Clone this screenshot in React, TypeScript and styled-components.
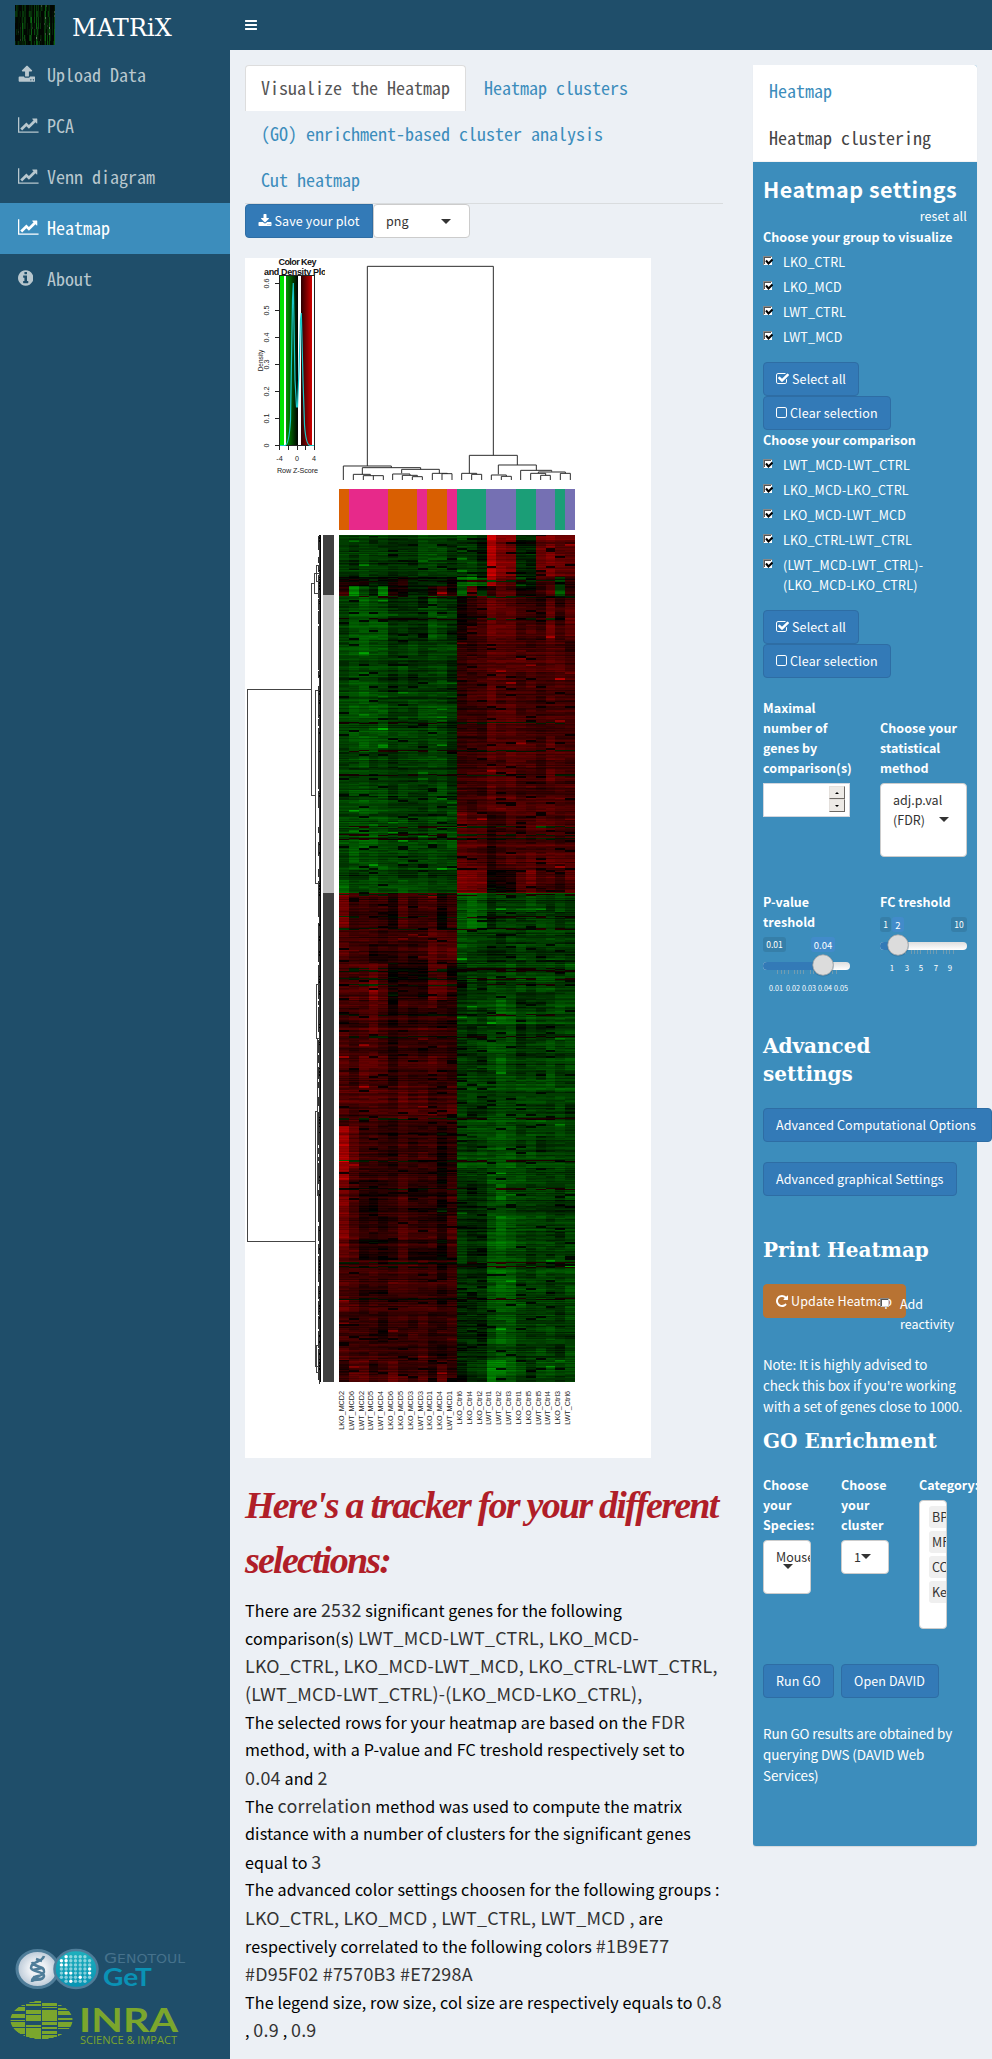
import React from "react";
import styled, { createGlobalStyle, css } from "styled-components";

const sans = '"Noto Sans CJK SC", "Noto Sans", sans-serif';
const mono = '"Noto Sans Mono CJK SC", "Liberation Mono", monospace';
const serif = '"DejaVu Serif", serif';

const GlobalStyle = createGlobalStyle`
  * { box-sizing: border-box; }
  html, body { margin: 0; padding: 0; overflow-x: hidden; }
  body { background: #ecf0f5; color: #333; font: 12.53px/20px ${sans}; }
  h1, h2, h3, p, ul { margin: 0; padding: 0; }
`;

/* ---------- icons ---------- */

const paths = {
  upload:
    "M1344 1472q0-26-19-45t-45-19-45 19-19 45 19 45 45 19 45-19 19-45zm256 0q0-26-19-45t-45-19-45 19-19 45 19 45 45 19 45-19 19-45zm128-224v320q0 40-28 68t-68 28h-1472q-40 0-68-28t-28-68v-320q0-40 28-68t68-28h427q21 56 70.5 92t110.5 36h256q61 0 110.5-36t70.5-92h427q40 0 68 28t28 68zm-325-648q-17 40-59 40h-256v448q0 26-19 45t-45 19h-256q-26 0-45-19t-19-45v-448h-256q-42 0-59-40-17-39 14-69l448-448q18-19 45-19t45 19l448 448q31 30 14 69z",
  download:
    "M1344 1344q0-26-19-45t-45-19-45 19-19 45 19 45 45 19 45-19 19-45zm256 0q0-26-19-45t-45-19-45 19-19 45 19 45 45 19 45-19 19-45zm128-224v320q0 40-28 68t-68 28h-1472q-40 0-68-28t-28-68v-320q0-40 28-68t68-28h465l135 136q58 56 136 56t136-56l136-136h464q40 0 68 28t28 68zm-325-569q17 41-14 70l-448 448q-18 19-45 19t-45-19l-448-448q-31-29-14-70 17-39 59-39h256v-448q0-26 19-45t45-19h256q26 0 45 19t19 45v448h256q42 0 59 39z",
  chart:
    "M2048 1536v128h-2048v-1536h128v1408h1920zm-128-1248v435q0 21-19.5 29.5t-35.5-7.5l-121-121-633 633q-10 10-23 10t-23-10l-233-233-416 416-192-192 585-585q10-10 23-10t23 10l233 233 464-464-121-121q-16-16-7.5-35.5t29.5-19.5h435q14 0 23 9t9 23z",
  info:
    "M1024 1376v-160q0-14-9-23t-23-9h-96v-512q0-14-9-23t-23-9h-320q-14 0-23 9t-9 23v160q0 14 9 23t23 9h96v320h-96q-14 0-23 9t-9 23v160q0 14 9 23t23 9h448q14 0 23-9t9-23zm-128-896v-160q0-14-9-23t-23-9h-192q-14 0-23 9t-9 23v160q0 14 9 23t23 9h192q14 0 23-9t9-23zm640 416q0 209-103 385.5t-279.5 279.5-385.5 103-385.5-103-279.5-279.5-103-385.5 103-385.5 279.5-279.5 385.5-103 385.5 103 279.5 279.5 103 385.5z",
  checkSquare:
    "M1408 930v318q0 119-84.500 203.500t-203.500 84.500h-832q-119 0-203.500-84.500t-84.500-203.500v-832q0-119 84.500-203.500t203.500-84.500h832q63 0 117 25 15 7 18 23 3 17-9 29l-49 49q-10 10-23 10-3 0-9-2-23-6-45-6h-832q-66 0-113 47t-47 113v832q0 66 47 113t113 47h832q66 0 113-47t47-113v-254q0-13 9-22l64-64q10-10 23-10 6 0 12 3 20 8 20 29zm231-489l-814 814q-24 24-57 24t-57-24l-430-430q-24-24-24-57t24-57l110-110q24-24 57-24t57 24l263 263 647-647q24-24 57-24t57 24l110 110q24 24 24 57t-24 57z",
  square:
    "M1120 256h-832q-66 0-113 47t-47 113v832q0 66 47 113t113 47h832q66 0 113-47t47-113v-832q0-66-47-113t-113-47zm288 160v832q0 119-84.500 203.500t-203.500 84.500h-832q-119 0-203.500-84.500t-84.500-203.500v-832q0-119 84.500-203.500t203.500-84.500h832q119 0 203.500 84.500t84.500 203.500z",
  repeat:
    "M1536 256v448q0 26-19 45t-45 19h-448q-42 0-59-40-17-39 14-69l138-138q-148-137-349-137-104 0-198.500 40.500t-163.500 109.500-109.500 163.500-40.500 198.500 40.500 198.500 109.500 163.500 163.500 109.500 198.500 40.500q119 0 225-52t179-147q7-10 23-12 15 0 25 9l137 138q9 8 9.500 20.500t-7.500 22.500q-109 132-264 204.500t-327 72.500q-156 0-298-61t-245-164-164-245-61-298 61-298 164-245 245-164 298-61q147 0 284.500 55.500t244.500 156.500l130-129q29-31 70-14 39 17 39 59z",
  bars:
    "M1536 1344v128q0 26-19 45t-45 19h-1408q-26 0-45-19t-19-45v-128q0-26 19-45t45-19h1408q26 0 45 19t19 45zm0-512v128q0 26-19 45t-45 19h-1408q-26 0-45-19t-19-45v-128q0-26 19-45t45-19h1408q26 0 45 19t19 45zm0-512v128q0 26-19 45t-45 19h-1408q-26 0-45-19t-19-45v-128q0-26 19-45t45-19h1408q26 0 45 19t19 45z",
};

const widths = { upload: 1728, download: 1728, chart: 2048, info: 1536, checkSquare: 1664, square: 1408, repeat: 1536, bars: 1536 };

function Icon({ name, size = 14 }: { name: keyof typeof paths; size?: number }) {
  const w = widths[name];
  return (
    <svg width={(w / 1792) * size} height={size} viewBox={`0 0 ${w} 1792`} fill="currentColor">
      <path d={paths[name]} />
    </svg>
  );
}

/* ---------- page frame ---------- */

const Page = styled.div`
  display: flex;
  height: 2059px;
  width: 992px;
`;

const Sidebar = styled.aside`
  display: flex;
  flex-direction: column;
  width: 230px;
  flex: none;
  background: #1f4e6a;
`;

const Brand = styled.div`
  display: flex;
  align-items: center;
  height: 50px;
  padding-left: 15px;
  gap: 17px;
  color: #fff;
  font: 24px/30px ${serif};
  svg { display: block; }
`;

const BrandName = styled.span`
  padding-top: 6px;
  letter-spacing: 0.1px;
`;

const MenuItem = styled.a<{ $active?: boolean }>`
  display: flex;
  align-items: center;
  height: 51px;
  padding: 0 0 4px 18px;
  font: 18px/26px ${mono};
  color: ${(p) => (p.$active ? "#fff" : "#b8c7ce")};
  background: ${(p) => (p.$active ? "#3c8dbc" : "transparent")};
`;

const MenuIcon = styled.span`
  display: flex;
  width: 29px;
`;

const Logos = styled.div`
  margin-top: auto;
  height: 116px;
  svg { display: block; }
`;

const Main = styled.main`
  flex: 1;
  min-width: 0;
`;

const TopBar = styled.header`
  display: flex;
  align-items: center;
  height: 50px;
  padding-left: 15px;
  color: #fff;
  background: #1f4e6a;
`;

const Content = styled.section`
  display: grid;
  grid-template-columns: 478px 224px;
  column-gap: 30px;
  align-items: start;
  padding: 15px;
`;

/* ---------- left column ---------- */

const Tabs = styled.nav`
  display: flex;
  flex-wrap: wrap;
  border-bottom: 1px solid #d9dcde;
`;

const Tab = styled.a<{ $active?: boolean }>`
  height: 46px;
  margin-right: 2px;
  padding: 8px 15px 0;
  border: 1px solid transparent;
  border-bottom: 0;
  border-radius: 4px 4px 0 0;
  font: 18px/26px ${mono};
  color: #3c8dbc;
  ${(p) =>
    p.$active &&
    css`
      color: #555;
      background: #fff;
      border-color: #ddd;
    `}
`;

const SaveRow = styled.div`
  display: flex;
  height: 34px;
  margin-bottom: 20px;
`;

const Button = styled.button<{ $width: number; $tone?: "copper"; $joined?: boolean }>`
  display: flex;
  align-items: center;
  gap: 3px;
  flex: none;
  width: ${(p) => p.$width}px;
  height: 34px;
  padding: 0 0 1px 12px;
  font: 12.53px/20px ${sans};
  letter-spacing: 0.12px;
  white-space: nowrap;
  color: #fff;
  background: ${(p) => (p.$tone ? "#b87333" : "#337ab7")};
  border: 1px solid ${(p) => (p.$tone ? "#b87333" : "#2e6da4")};
  border-radius: ${(p) => (p.$joined ? "4px 0 0 4px" : "4px")};
`;

const Select = styled.div<{ $height: number; $width?: number }>`
  position: relative;
  width: ${(p) => (p.$width ? `${p.$width}px` : "100%")};
  height: ${(p) => p.$height}px;
  padding: 6px 12px;
  overflow: hidden;
  white-space: nowrap;
  color: #333;
  background: #fff;
  border: 1px solid #ccc;
  border-radius: 4px;
`;

const Caret = styled.i<{ $x: number; $y: number }>`
  position: absolute;
  left: ${(p) => p.$x}px;
  top: ${(p) => p.$y}px;
  border: 5px solid transparent;
  border-top-color: #333;
  border-bottom-width: 0;
`;

const Plot = styled.svg`
  display: block;
  background: #fff;
`;

const TrackerTitle = styled.h1`
  margin-top: 20px;
  font: italic bold 38px/54.5px "Liberation Serif", serif;
  letter-spacing: -1.77px;
  color: #b01e28;
  white-space: nowrap;
`;

const Tracker = styled.div`
  margin-top: 8px;
  font-size: 16.1px;
  line-height: 28px;
  letter-spacing: 0.13px;
  color: #000;
  white-space: nowrap;
`;

const Line = styled.p`
  height: 28px;
`;

const Value = styled.span`
  font-size: 17.9px;
  letter-spacing: 0.24px;
  color: #333;
`;

/* ---------- settings panel ---------- */

const Box = styled.aside`
  width: 224px;
  height: 1781px;
  border-radius: 3px;
  background: #3c8dbc;
  box-shadow: 0 1px 1px rgba(0, 0, 0, 0.1);
`;

const BoxTabs = styled.nav`
  display: flex;
  flex-direction: column;
  height: 97px;
  padding: 2px 16px 0;
  background: #fff;
  border-radius: 0 3px 0 0;
  border-bottom: 1px solid #f4f4f4;
`;

const BoxTab = styled.a<{ $active?: boolean }>`
  height: 48px;
  padding-top: 10px;
  font: 18px/26px ${mono};
  color: ${(p) => (p.$active ? "#444" : "#3c8dbc")};
`;

const BoxBody = styled.div`
  padding: 14px 10px 0;
  color: #fff;
`;

const Title = styled.h2`
  font: bold 21.5px/26px ${sans};
  letter-spacing: 0.5px;
  white-space: nowrap;
`;

const Heading = styled.h3<{ $top: number }>`
  margin-top: ${(p) => p.$top}px;
  font: bold 20px/28px ${serif};
  white-space: nowrap;
`;

const Reset = styled.a`
  display: block;
  margin: 4px 0 1px;
  letter-spacing: 0.15px;
  text-align: right;
`;

const Label = styled.div`
  font-weight: bold;
  letter-spacing: 0.04px;
  white-space: nowrap;
`;

const CheckList = styled.div`
  display: flex;
  flex-direction: column;
  gap: 5px;
  margin: 5px 0 15px;
`;

const CheckRow = styled.label`
  display: flex;
  align-items: flex-start;
  gap: 10px;
  letter-spacing: 0.18px;
  white-space: nowrap;
  svg { display: block; flex: none; margin-top: 4px; }
`;

const Stack = styled.div<{ $gap?: number; $top?: number }>`
  display: flex;
  flex-direction: column;
  gap: ${(p) => p.$gap ?? 0}px;
  margin-top: ${(p) => p.$top ?? 0}px;
`;

const TwoCols = styled.div<{ $top: number }>`
  display: grid;
  grid-template-columns: 87px 87px;
  column-gap: 30px;
  margin-top: ${(p) => p.$top}px;
`;

const Cell = styled.div<{ $offset?: number }>`
  display: flex;
  flex-direction: column;
  gap: 5px;
  padding-top: ${(p) => p.$offset ?? 0}px;
`;

const NumberInput = styled.div`
  display: flex;
  justify-content: flex-end;
  width: 87px;
  height: 34px;
  padding: 2px 4px 0 0;
  background: #fff;
  border: 1px solid #d2d6de;
`;

const Spinner = styled.div`
  display: flex;
  flex-direction: column;
`;

const SpinButton = styled.span`
  display: flex;
  align-items: center;
  justify-content: center;
  width: 16px;
  height: 13px;
  background: #edeae6;
  border: 1px solid;
  border-color: #e4e0dc #6c6864 #6c6864 #e4e0dc;
`;

const PrintRow = styled.div`
  display: flex;
  height: 34px;
  margin-top: 20px;
`;

const Reactivity = styled.label`
  position: relative;
  display: flex;
  gap: 10px;
  margin-left: -26px;
  padding-top: 10px;
  height: 54px;
  svg { display: block; flex: none; margin-top: 4px; }
`;

const Note = styled.p<{ $top: number }>`
  margin-top: ${(p) => p.$top}px;
  font-size: 13.43px;
  line-height: 21px;
  letter-spacing: -0.11px;
  white-space: nowrap;
`;

const ThreeCols = styled.div`
  display: grid;
  grid-template-columns: 48px 48px 58px;
  column-gap: 30px;
  height: 154px;
  margin-top: 20px;
`;

const ClippedLabel = styled(Label)`
  overflow: hidden;
`;

const TagBox = styled.div`
  display: flex;
  flex-direction: column;
  gap: 3px;
  width: 28px;
  height: 129px;
  padding: 5px 0 0 9px;
  overflow: hidden;
  background: #fff;
  border: 1px solid #ccc;
  border-radius: 4px;
`;

const Tag = styled.span`
  height: 22px;
  width: 40px;
  padding: 1px 3px;
  color: #333;
  background: #efefef;
  border-radius: 3px;
`;

const ButtonRow = styled.div`
  display: flex;
  gap: 7px;
  margin-top: 35px;
`;

/* ---------- small drawings ---------- */

function Checkbox({ checked = true }: { checked?: boolean }) {
  return (
    <svg width="10" height="10" viewBox="0 0 10 10" shapeRendering={checked ? "auto" : "crispEdges"}>
      <rect width="9" height="9" fill="#fff" />
      <path d="M0 9V0H9V1H1V9z" fill="#888" />
      <path d="M1 8V1H8V2H2V8z" fill="#555" />
      {checked ? (
        <path d="M3 4.500L5.500 7.500L9.500 3.500" fill="none" stroke="#000" strokeWidth="2" />
      ) : (
        <path d="M1 8H8V1" fill="none" stroke="#ccc" />
      )}
    </svg>
  );
}

type SliderProps = {
  min: string; max?: string; value: string; at: number;
  minW: number; valueX: number; valueW: number;
  marks: [number, string][];
};

const sliderTicks = [14, 18, 21, 25, 31, 34, 37, 40, 47, 50, 53, 56, 63, 66, 69, 73];

function Slider({ min, max, value, at, minW, valueX, valueW, marks }: SliderProps) {
  return (
    <svg width="88" height="62" viewBox="0 0 88 62" fontFamily={sans} fill="#fff" textAnchor="middle">
      <defs>
        <linearGradient id="rail" x1="0" x2="0" y1="0" y2="1">
          <stop offset="0" stopColor="#dedede" />
          <stop offset="1" stopColor="#fff" />
        </linearGradient>
      </defs>
      <rect width={minW} height="15" rx="3" fill="#367fa9" />
      <text x={minW / 2} y="11" fontSize="8.500">{min}</text>
      {max && (
        <>
          <rect x="71" width="16" height="15" rx="3" fill="#367fa9" />
          <text x="79" y="11" fontSize="8.500">{max}</text>
        </>
      )}
      <rect x={valueX} width={valueW} height="15" rx="3" fill="#428bca" />
      <text x={valueX + valueW / 2} y="12" fontSize="9.500">{value}</text>
      {sliderTicks.map((x) => (
        <path key={x} d={`M${x + 0.5} 33v4`} stroke="#7f9fae" strokeWidth="0.800" />
      ))}
      <rect y="25" width="87" height="8" rx="4" fill="url(#rail)" />
      <path d={`M4 25H${at}V33H4a4 4 0 0 1 0-8z`} fill="#337ab7" />
      <circle cx={at} cy="28.500" r="11" fill="#1d5c88" opacity=".35" />
      <circle cx={at} cy="28" r="10.200" fill="#dcdcdc" stroke="#aaa" strokeWidth="0.800" />
      {marks.map(([x, t]) => (
        <text key={x} x={x} y="54" fontSize={t.length > 1 ? 7.2 : 7.8}>{t}</text>
      ))}
    </svg>
  );
}

function noise(a: number, b: number) {
  let h = (Math.imul(a + 11, 374761393) + Math.imul(b + 7, 668265263)) | 0;
  h = Math.imul(h ^ (h >>> 13), 1274126177);
  h ^= h >>> 16;
  return (h >>> 0) / 4294967296;
}

function MatrixMark() {
  const drops: React.ReactNode[] = [];
  for (let x = 0; x < 40; x += 1) {
    for (let y = 0; y < 40; y += 2) {
      const strength = noise(x, 99) * 0.6 + noise(x, Math.floor(y / 6)) * 0.5 - 0.45;
      if (strength > 0) {
        drops.push(<rect key={`${x}-${y}`} x={x} y={y} width="1" height="2" fill={noise(x, y) > 0.96 ? "#7a9a7a" : "#0c6a14"} opacity={Math.min(1, strength * 1.6)} />);
      }
    }
  }
  return (
    <svg width="40" height="40" viewBox="0 0 40 40" shapeRendering="crispEdges">
      <rect width="40" height="40" fill="#020602" />
      {drops}
    </svg>
  );
}

function PartnerLogos() {
  const dots: React.ReactNode[] = [];
  for (let r = 0; r < 7; r++) {
    for (let c = 0; c < 7; c++) {
      const dx = c - 3;
      const dy = r - 3;
      if (dx * dx + dy * dy > 14) continue;
      dots.push(<circle key={`${r}${c}`} cx={75.5 + dx * 4.7} cy={26 + dy * 4.1} r="1.700" fill="#fff" opacity={noise(r, c) > 0.75 ? 1 : 0.5} />);
    }
  }
  const strips: React.ReactNode[] = [];
  for (let c = 0; c < 4; c++) {
    for (let i = 0; i < 38; i++) {
      const mid = Math.abs((10 + c * 16 + 8) - 41.5);
      const half = 19 - (mid > 16 ? 3.5 : 0);
      const y = 58 + i;
      const dy = Math.abs(y + 0.5 - 77) / 19;
      if (Math.abs(y - 77) > half || noise(c + 40, Math.floor(i / 1.4)) < 0.33) continue;
      const edge = 31 * Math.sqrt(Math.max(0, 1 - dy * dy));
      const x0 = Math.max(10 + c * 16, 41.5 - edge);
      const x1 = Math.min(10 + c * 16 + 15, 41.5 + edge);
      if (x1 > x0) strips.push(<rect key={`${c}-${i}`} x={x0} y={y} width={x1 - x0} height="1" />);
    }
  }
  return (
    <svg width="230" height="116" viewBox="0 0 230 116">
      <defs>
        <radialGradient id="pearl"><stop offset=".4" stopColor="#eef1f5" /><stop offset="1" stopColor="#b9c8d6" /></radialGradient>
        <linearGradient id="aqua" x1="0" x2="0" y1="0" y2="1"><stop offset="0" stopColor="#1fb0bd" /><stop offset="1" stopColor="#0693b3" /></linearGradient>
      </defs>
      <ellipse cx="37.500" cy="26" rx="20.500" ry="18.500" fill="url(#pearl)" stroke="#4f7d99" strokeWidth="3" />
      <path d="M44 13C42 20 31 18 31 25C32 29 44 28 44 33C43 39 35 35 32 38M32 19C34 25 45 22 44 29C42 36 32 30 32 39M36 16l6 2M33 27l9-2M33 34l9 2" fill="none" stroke="#4f7d99" strokeWidth="2.600" />
      <ellipse cx="76" cy="26" rx="21.500" ry="19" fill="url(#aqua)" stroke="#4f7d99" strokeWidth="2.500" />
      {dots}
      <g fontFamily='"DejaVu Sans", sans-serif' fill="#46728c">
        <text x="104" y="20" fontSize="14.500" textLength="81" lengthAdjust="spacingAndGlyphs">
          G<tspan fontSize="12">ENOTOUL</tspan>
        </text>
        <text x="103" y="43" fontSize="25" fontWeight="bold" fill="#0a92b5" textLength="49" lengthAdjust="spacingAndGlyphs" fontFamily="Lato, sans-serif">GeT</text>
      </g>
      <g fill="#7ba62d">
        {strips}
        <g fontFamily="Lato, sans-serif">
          <text x="79" y="89" fontSize="33" fontWeight="bold" textLength="99" lengthAdjust="spacingAndGlyphs">INRA</text>
          <text x="80" y="101" fontSize="10.500" fontFamily='"Open Sans", sans-serif' textLength="97" lengthAdjust="spacingAndGlyphs">SCIENCE &amp; IMPACT</text>
        </g>
      </g>
    </svg>
  );
}

/* ---------- heatmap plot ---------- */

const groupBars: [number, number, string][] = [
  [312, 342, "#D95F02"], [342, 459, "#E7298A"], [459, 546, "#D95F02"], [546, 576, "#E7298A"],
  [576, 636, "#D95F02"], [636, 666, "#E7298A"], [666, 753, "#1B9E77"], [753, 843, "#7570B3"],
  [843, 903, "#1B9E77"], [903, 960, "#7570B3"], [960, 990, "#1B9E77"], [990, 1020, "#7570B3"],
];

const samples =
  "LKO_MCD2 LWT_MCD6 LWT_MCD2 LWT_MCD5 LWT_MCD4 LKO_MCD6 LKO_MCD5 LKO_MCD3 LWT_MCD3 LKO_MCD1 LKO_MCD4 LWT_MCD1 LKO_Ctrl6 LKO_Ctrl4 LKO_Ctrl2 LWT_Ctrl1 LWT_Ctrl2 LWT_Ctrl3 LKO_Ctrl1 LKO_Ctrl5 LWT_Ctrl5 LWT_Ctrl4 LKO_Ctrl3 LWT_Ctrl6".split(" ");

/* First row of each band, then the mean expression of the 24 samples. */
const bands: [number, number[]][] = [
  [535, [-20, -22, -26, -22, -22, -16, -18, -20, -26, -28, -26, -18, -24, -22, -10, 70, 48, 46, -10, -12, 36, 46, 36, 36]],
  [577, [8, 6, 5, -6, -5, 5, 5, -8, -12, -10, -8, 6, -50, -55, -40, 65, 42, 42, -25, -12, 20, 25, -18, 20]],
  [586, [20, -55, -25, -10, -50, 8, 3, -8, -15, 10, 30, 12, -35, 38, -15, 15, 36, 34, 8, 5, 15, 36, -25, 22]],
  [596, [-28, -30, -36, -30, -32, -16, -18, -16, -16, -30, -28, -18, 8, 18, 26, 42, 38, 34, 24, 26, 16, 36, 20, 36]],
  [640, [-26, -30, -32, -28, -28, -20, -22, -20, -22, -26, -26, -18, 22, 24, 26, 36, 32, 36, 28, 28, 26, 32, 30, 24]],
  [812, [-30, -32, -34, -32, -28, -22, -28, -26, -24, -26, -26, -28, 38, 32, 30, 14, 22, 28, 28, 28, 32, 28, 24, 30]],
  [870, [-30, -22, -24, -28, -26, -22, -24, -22, -24, -22, -22, -18, 52, 46, 40, 8, 8, 12, 32, 42, 26, 28, 22, 32]],
  [893, [48, 24, 22, 24, 22, 6, 30, 20, 22, 26, 8, 20, -32, -42, -34, -16, -26, -22, -18, -26, -26, -20, -22, -20]],
  [930, [32, 26, 26, 20, 18, 18, 22, 18, 20, 36, 30, 34, -30, -26, -28, -20, -22, -20, -24, -26, -24, -26, -22, -20]],
  [963, [30, 26, 28, 44, 26, 4, 12, 10, 8, 32, 36, 16, -14, -26, -18, -28, -28, -26, -26, -24, -28, -26, -22, -26]],
  [1000, [26, 24, 30, 32, 26, 14, 24, 20, 22, 26, 20, 16, -20, -26, -22, -30, -34, -28, -20, -26, -22, -30, -26, -26]],
  [1080, [26, 26, 28, 28, 26, 20, 28, 26, 26, 22, 22, 28, -26, -24, -26, -26, -30, -26, -28, -26, -30, -26, -24, -22]],
  [1126, [64, 36, 20, 20, 22, 16, 22, 18, 20, 24, 8, 18, -26, -24, -26, -30, -36, -32, -26, -26, -24, -24, -26, -26]],
  [1180, [44, 30, 14, 12, 14, 16, 26, 18, 16, 18, 6, 24, -20, -16, -18, -32, -38, -32, -24, -22, -24, -22, -20, -26]],
  [1260, [28, 24, 20, 22, 18, 22, 24, 22, 24, 20, 14, 20, -18, -16, -16, -34, -38, -32, -24, -22, -24, -24, -20, -26]],
  [1360, [16, 28, 32, 18, 24, 36, 26, 26, 26, 12, 30, 20, -6, -20, -18, -46, -44, -38, -26, -18, -26, -26, -24, -26]],
];

function buildCells() {
  const layers: Record<string, string> = {};
  let band = 0;
  for (let y = 535; y < 1382; y++) {
    while (band + 1 < bands.length && y >= bands[band + 1][0]) band++;
    const leftShift = (noise(y, 500) - 0.5) * 16 + (noise(y >> 2, 501) - 0.5) * 8;
    const rightShift = (noise(y, 502) - 0.5) * 16 + (noise(y >> 2, 503) - 0.5) * 8;
    const outlier = noise(y >> 1, 504) > 0.95;
    bands[band][1].forEach((base, c) => {
      const side = c < 12 ? leftShift : rightShift;
      let v = base * 0.96 + Math.sign(base) * side + (noise(y >> 1, c) - 0.5) * 9 + (noise(y >> 4, c + 60) - 0.5) * 10;
      const spark = noise(Math.floor(y / 2), c + 100);
      if (spark > 0.988) v *= 1.7;
      else if (spark < 0.05) v *= 0.15;
      if (outlier && noise(y, c + 200) > 0.45) v *= -0.4;
      const level = Math.min(88, Math.round(Math.abs(v) / 4) * 4);
      if (level === 0) return;
      const tone = Math.round(level * 2.55);
      const key = v > 0 ? `rgb(${tone},0,0)` : `rgb(0,${tone},0)`;
      const x0 = Math.round(339 + (c * 236) / 24);
      const x1 = Math.round(339 + ((c + 1) * 236) / 24);
      layers[key] = (layers[key] ?? "") + `M${x0} ${y}h${x1 - x0}v1h${x0 - x1}z`;
    });
  }
  return Object.entries(layers);
}

const cells = buildCells();

function buildTwigs() {
  let d = "";
  for (let y = 536; y < 1380; y += 3) {
    const reach = 1 + Math.floor(noise(y, 700) * 2);
    const span = 2 + Math.floor(noise(y, 701) * 9);
    d += `M320 ${y}.5h-${reach}v${span}h${reach}`;
  }
  return d;
}

const twigs = buildTwigs();

function HeatmapPlot() {
  return (
    <Plot width="406" height="1200" viewBox="245 258 406 1200" fontFamily='"Liberation Sans", Arial, sans-serif'>
      <defs>
        <linearGradient id="lowKey"><stop offset="0" stopColor="#009600" /><stop offset="1" stopColor="#000" /></linearGradient>
        <linearGradient id="highKey"><stop offset="0" stopColor="#2a0000" /><stop offset="1" stopColor="#d20000" /></linearGradient>
        <clipPath id="titleClip"><rect x="264" y="258" width="61" height="30" /></clipPath>
      </defs>

      <g fontWeight="bold" fontSize="9" fill="#111">
        <text x="278.500" y="265" textLength="38">Color Key</text>
        <text x="264" y="275" textLength="65" clipPath="url(#titleClip)">and Density Plot</text>
      </g>
      <g shapeRendering="crispEdges">
        <rect x="280" y="275" width="4" height="170" fill="#00e600" />
        <rect x="286" y="275" width="12" height="170" fill="url(#lowKey)" />
        <rect x="301" y="275" width="11" height="170" fill="url(#highKey)" />
        <path d="M279.500 275.500V445.500H314.500V275.500zM275 283.500h4M275 310.500h4M275 337.500h4M275 364.500h4M275 391.500h4M275 418.500h4M275 445.500h4M279.500 446v4M288.500 446v4M297.500 446v4M305.500 446v4M314.500 446v4" fill="none" stroke="#222" />
      </g>
      <path d="M280 445.500H285Q289 445 290.500 420L292.500 300L293.300 283L295 380L296.500 407H297.500L299 370L300.500 320L301.300 313L303 380L304.500 425Q306 445 310 445.500H314" fill="none" stroke="#18c8c8" strokeWidth="1.200" />
      <g fontSize="7.200" fill="#222">
        {["0", "0.1", "0.2", "0.3", "0.4", "0.5", "0.6"].map((t, i) => (
          <text key={t} textAnchor="middle" transform={`translate(269 ${445.5 - i * 27}) rotate(-90)`}>{t}</text>
        ))}
        <text textAnchor="middle" transform="translate(262.500 360.500) rotate(-90)" fontSize="6.500">Density</text>
        <text x="279.500" y="461" textAnchor="middle">-4</text>
        <text x="297" y="461" textAnchor="middle">0</text>
        <text x="314" y="461" textAnchor="middle">4</text>
        <text x="277" y="473" textLength="41">Row Z-Score</text>
      </g>

      <path
        transform="translate(235 250) scale(.33333)"
        fill="none"
        stroke="#2c2c2c"
        strokeWidth="3"
        d="M397 648V49H775V616M325 690V648H469V653M382 673V653H557V658M355 690V673H406V677M385 690V677H445V690M415 677V690M500 670V658H613V670M473 690V672H525V676M502 690V676H547V680M532 690V680H562V690M592 690V670H637V672M621 690V671H651V690M703 670V616H847V645M680 690V670H725V673M710 690V673H740V690M790 673V645H904V661M769 690V675H814V679M799 690V679H829V690M857 690V661H950V665M910 669V666H991V670M887 690V670H932V676M917 690V676H946V690M976 690V670H1006V690"
      />

      <g shapeRendering="crispEdges">
        {groupBars.map(([a, b, fill]) => (
          <rect key={a} x={235 + a / 3} y="489" width={(b - a) / 3} height="41" fill={fill} />
        ))}
        <rect x="323" y="535" width="11" height="60" fill="#404040" />
        <rect x="323" y="595" width="11" height="298" fill="#bebebe" />
        <rect x="323" y="893" width="11" height="489" fill="#404040" />
        <rect x="339" y="535" width="236" height="847" fill="#000" />
        {cells.map(([fill, d]) => (
          <path key={fill} d={d} fill={fill} />
        ))}
        <rect x="319" y="535" width="2" height="847" fill="#000" />
        <path d={twigs} fill="none" stroke="#333" />
        <path
          fill="none"
          stroke="#444"
          d="M311.500 689.500H247.500V1241.500H315.500M314.500 583.500H311.500V795.500H315.500M318.500 573.500H314.500V593.500H318.500M318.500 565.500H316.500V581.500H318.500M317.500 690.500H315.500V883.500H318.500M317.500 1111.500H315.500V1366.500H318.500M318.500 984.500H316.500V1038.500H318.500M318.500 1038.500H317.500V1195.500H318.500M318.500 1345.500H316.500V1372.500H318.500"
        />
      </g>

      <g fontSize="7.200" fill="#222">
        {samples.map((s, i) => (
          <text key={s} textAnchor="end" transform={`translate(${344 + i * 9.83} 1391) rotate(-90)`}>{s}</text>
        ))}
      </g>
    </Plot>
  );
}

/* ---------- page ---------- */

export default function App() {
  return (
    <>
      <GlobalStyle />
      <Page>
        <Sidebar>
          <Brand><MatrixMark /><BrandName>MATRiX</BrandName></Brand>
          <MenuItem><MenuIcon><Icon name="upload" size={18} /></MenuIcon>Upload Data</MenuItem>
          <MenuItem><MenuIcon><Icon name="chart" size={18} /></MenuIcon>PCA</MenuItem>
          <MenuItem><MenuIcon><Icon name="chart" size={18} /></MenuIcon>Venn diagram</MenuItem>
          <MenuItem $active><MenuIcon><Icon name="chart" size={18} /></MenuIcon>Heatmap</MenuItem>
          <MenuItem><MenuIcon><Icon name="info" size={18} /></MenuIcon>About</MenuItem>
          <Logos><PartnerLogos /></Logos>
        </Sidebar>

        <Main>
          <TopBar><Icon name="bars" size={14} /></TopBar>
          <Content>
            <div>
              <Tabs>
                <Tab $active>Visualize the Heatmap</Tab>
                <Tab>Heatmap clusters</Tab>
                <Tab>(GO) enrichment-based cluster analysis</Tab>
                <Tab>Cut heatmap</Tab>
              </Tabs>
              <SaveRow>
                <Button $width={128} $joined><Icon name="download" />Save your plot</Button>
                <Select $height={34} $width={97}>png<Caret $x={67} $y={14} /></Select>
              </SaveRow>
              <HeatmapPlot />
              <TrackerTitle>Here's a tracker for your different<br />selections:</TrackerTitle>
              <Tracker>
                <Line>There are <Value>2532</Value> significant genes for the following</Line>
                <Line>comparison(s) <Value>LWT_MCD-LWT_CTRL, LKO_MCD-</Value></Line>
                <Line><Value>LKO_CTRL, LKO_MCD-LWT_MCD, LKO_CTRL-LWT_CTRL,</Value></Line>
                <Line><Value>(LWT_MCD-LWT_CTRL)-(LKO_MCD-LKO_CTRL),</Value></Line>
                <Line>The selected rows for your heatmap are based on the <Value>FDR</Value></Line>
                <Line>method, with a P-value and FC treshold respectively set to</Line>
                <Line><Value>0.04</Value> and <Value>2</Value></Line>
                <Line>The <Value>correlation</Value> method was used to compute the matrix</Line>
                <Line>distance with a number of clusters for the significant genes</Line>
                <Line>equal to <Value>3</Value></Line>
                <Line>The advanced color settings choosen for the following groups :</Line>
                <Line><Value>LKO_CTRL, LKO_MCD , LWT_CTRL, LWT_MCD ,</Value> are</Line>
                <Line>respectively correlated to the following colors <Value>#1B9E77</Value></Line>
                <Line><Value>#D95F02 #7570B3 #E7298A</Value></Line>
                <Line>The legend size, row size, col size are respectively equals to <Value>0.8</Value></Line>
                <Line>, <Value>0.9</Value> , <Value>0.9</Value></Line>
              </Tracker>
            </div>

            <Box>
              <BoxTabs>
                <BoxTab>Heatmap</BoxTab>
                <BoxTab $active>Heatmap clustering</BoxTab>
              </BoxTabs>
              <BoxBody>
                <Title>Heatmap settings</Title>
                <Reset>reset all</Reset>
                <Label>Choose your group to visualize</Label>
                <CheckList>
                  {["LKO_CTRL", "LKO_MCD", "LWT_CTRL", "LWT_MCD"].map((t) => (
                    <CheckRow key={t}><Checkbox />{t}</CheckRow>
                  ))}
                </CheckList>
                <Stack>
                  <Button $width={96}><Icon name="checkSquare" />Select all</Button>
                  <Button $width={128}><Icon name="square" />Clear selection</Button>
                </Stack>
                <Label>Choose your comparison</Label>
                <CheckList>
                  {["LWT_MCD-LWT_CTRL", "LKO_MCD-LKO_CTRL", "LKO_MCD-LWT_MCD", "LKO_CTRL-LWT_CTRL"].map((t) => (
                    <CheckRow key={t}><Checkbox />{t}</CheckRow>
                  ))}
                  <CheckRow><Checkbox /><span>(LWT_MCD-LWT_CTRL)-<br />(LKO_MCD-LKO_CTRL)</span></CheckRow>
                </CheckList>
                <Stack>
                  <Button $width={96}><Icon name="checkSquare" />Select all</Button>
                  <Button $width={128}><Icon name="square" />Clear selection</Button>
                </Stack>

                <TwoCols $top={20}>
                  <Cell>
                    <Label>Maximal<br />number of<br />genes by<br />comparison(s)</Label>
                    <NumberInput>
                      <Spinner>
                        <SpinButton><svg width="4" height="2"><path d="M2 0L4 2H0z" /></svg></SpinButton>
                        <SpinButton><svg width="4" height="2"><path d="M0 0H4L2 2z" /></svg></SpinButton>
                      </Spinner>
                    </NumberInput>
                  </Cell>
                  <Cell $offset={20}>
                    <Label>Choose your<br />statistical<br />method</Label>
                    <Select $height={74}>adj.p.val<br />(FDR)<Caret $x={58} $y={33} /></Select>
                  </Cell>
                </TwoCols>

                <TwoCols $top={35}>
                  <Cell>
                    <Label>P-value<br />treshold</Label>
                    <Slider min="0.01" value="0.04" at={60} minW={23} valueX={48} valueW={24}
                      marks={[[13, "0.01"], [30, "0.02"], [46, "0.03"], [62, "0.04"], [78, "0.05"]]} />
                  </Cell>
                  <Cell>
                    <Label>FC treshold</Label>
                    <Slider min="1" max="10" value="2" at={18} minW={11} valueX={12} valueW={12}
                      marks={[[12, "1"], [27, "3"], [41, "5"], [56, "7"], [70, "9"]]} />
                  </Cell>
                </TwoCols>

                <Heading $top={33}>Advanced<br />settings</Heading>
                <Stack $gap={20} $top={20}>
                  <Button $width={229}>Advanced Computational Options</Button>
                  <Button $width={194}>Advanced graphical Settings</Button>
                </Stack>

                <Heading $top={40}>Print Heatmap</Heading>
                <PrintRow>
                  <Button $width={143} $tone="copper"><Icon name="repeat" />Update Heatmap</Button>
                  <Reactivity><Checkbox checked={false} /><span>Add<br />reactivity</span></Reactivity>
                </PrintRow>
                <Note $top={36}>Note: It is highly advised to<br />check this box if you're working<br />with a set of genes close to 1000.</Note>

                <Heading $top={10}>GO Enrichment</Heading>
                <ThreeCols>
                  <Cell>
                    <Label>Choose<br />your<br />Species:</Label>
                    <Select $height={54}>Mouse<Caret $x={19} $y={23} /></Select>
                  </Cell>
                  <Cell>
                    <Label>Choose<br />your<br />cluster</Label>
                    <Select $height={34}>1<Caret $x={19} $y={13} /></Select>
                  </Cell>
                  <Cell>
                    <ClippedLabel>Category:</ClippedLabel>
                    <TagBox><Tag>BP</Tag><Tag>MF</Tag><Tag>CC</Tag><Tag>Kegg</Tag></TagBox>
                  </Cell>
                </ThreeCols>
                <ButtonRow>
                  <Button $width={71}>Run GO</Button>
                  <Button $width={98}>Open DAVID</Button>
                </ButtonRow>
                <Note $top={25}>Run GO results are obtained by<br />querying DWS (DAVID Web<br />Services)</Note>
              </BoxBody>
            </Box>
          </Content>
        </Main>
      </Page>
    </>
  );
}
